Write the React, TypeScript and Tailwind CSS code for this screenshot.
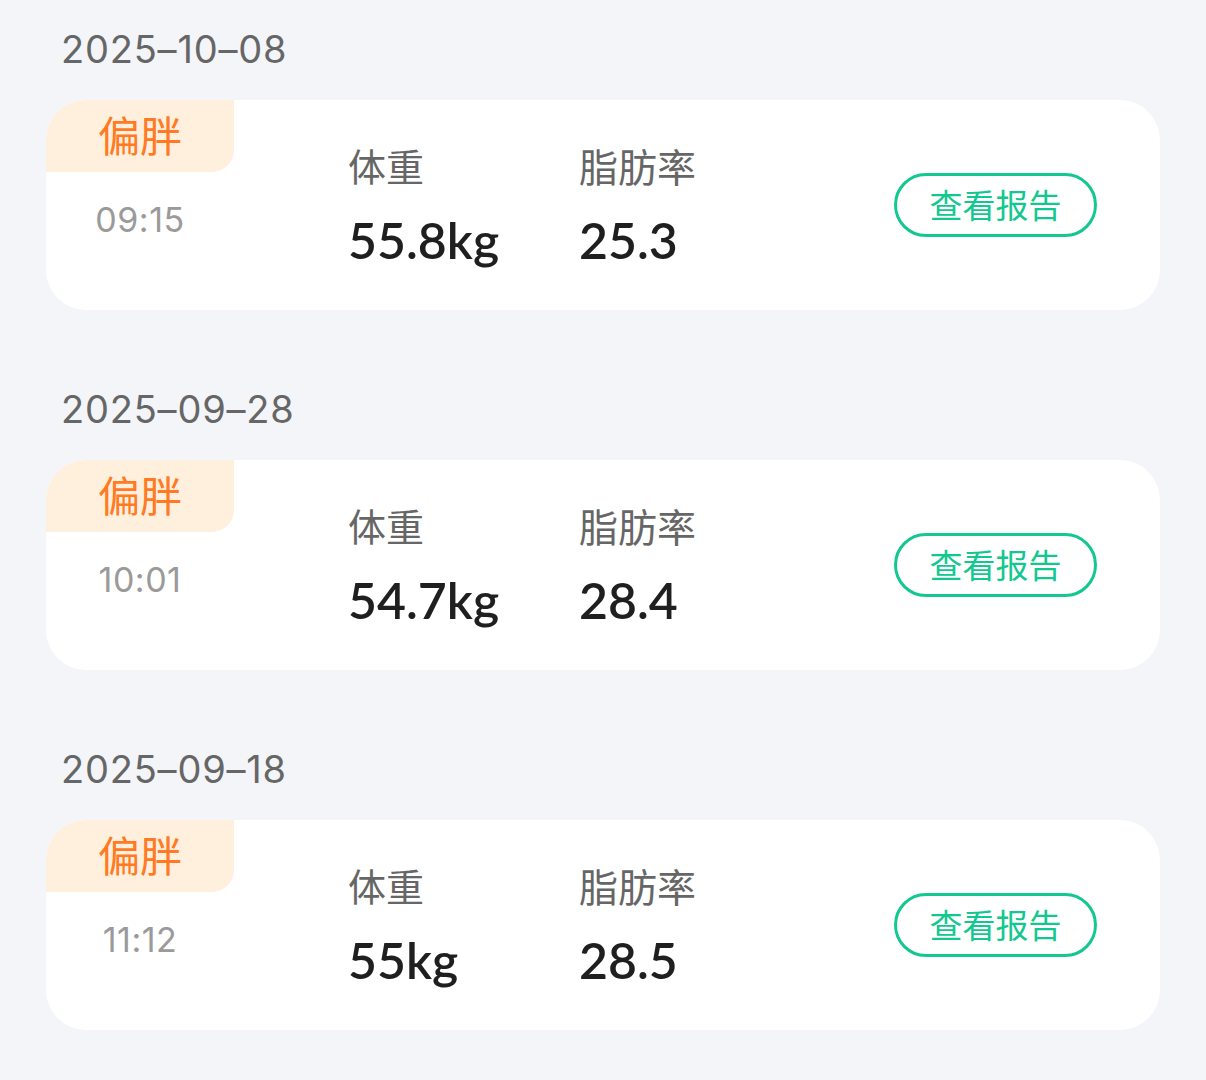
import React from "react";

const records = [
  { date: "2025–10–08", time: "09:15", weight: "55.8kg", fat: "25.3" },
  { date: "2025–09–28", time: "10:01", weight: "54.7kg", fat: "28.4" },
  { date: "2025–09–18", time: "11:12", weight: "55kg", fat: "28.5" },
];

export default function App() {
  return (
    <div className="min-h-[1080px] w-[1206px] bg-[#f4f5f9] pl-[46px] font-['Noto_Sans','Noto_Sans_CJK_SC',sans-serif]">
      {records.map((r, i) => (
        <div key={i} className={i === 0 ? "" : "mt-[50px]"}>
          <div className="flex h-[100px] items-center pb-[2px] pl-[15px] font-['Inter',sans-serif] text-[38px] leading-none tracking-[0.8px] text-[#666666]">
            {r.date}
          </div>
          <div className="flex h-[210px] w-[1114px] items-start overflow-hidden rounded-[40px] bg-white">
            <div className="flex w-[188px] flex-col items-center">
              <div className="flex h-[72px] w-[188px] items-center justify-center rounded-br-[22px] bg-[#fff0de] text-[42px] leading-none text-[#ff7a22]">
                偏胖
              </div>
              <div className="mt-[31px] font-['Inter',sans-serif] text-[34px] leading-none tracking-[0.5px] text-[#9a9a9a]">
                {r.time}
              </div>
            </div>
            <div className="ml-[114px] flex w-[231px] flex-col pt-[47px]">
              <div className="text-[38px] leading-none text-[#666666]">体重</div>
              <div className="mt-[30px] font-['Lato',sans-serif] text-[50px] font-semibold leading-none text-[#1f1f1f]">
                {r.weight}
              </div>
            </div>
            <div className="flex flex-col pt-[47px]">
              <div className="text-[39px] leading-none text-[#666666]">脂肪率</div>
              <div className="mt-[29px] font-['Lato',sans-serif] text-[50px] font-semibold leading-none text-[#1f1f1f]">
                {r.fat}
              </div>
            </div>
            <div className="ml-auto mr-[63px] flex h-[64px] w-[203px] items-center justify-center self-center rounded-full border-[3px] border-[#12c790] text-[33px] leading-none text-[#12c790]">
              查看报告
            </div>
          </div>
        </div>
      ))}
    </div>
  );
}
